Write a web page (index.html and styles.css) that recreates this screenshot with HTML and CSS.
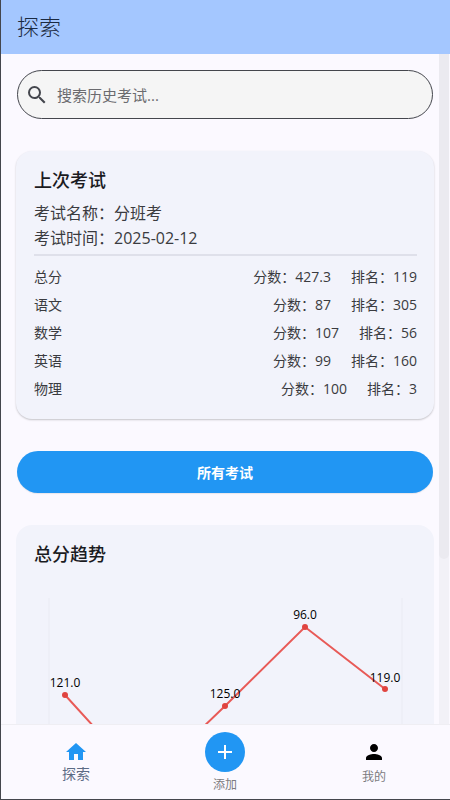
FILE: index.html
```html
<!DOCTYPE html>
<html lang="zh">
<head>
<meta charset="utf-8">
<title>探索</title>
<link rel="stylesheet" href="styles.css">
</head>
<body>
<div class="app">
  <header class="appbar">探索</header>
  <div class="body">
    <main class="content">
      <div class="search">
        <svg class="search-icon" viewBox="0 0 24 24"><path d="M15.5 14h-.79l-.28-.27A6.47 6.47 0 0 0 16 9.5 6.5 6.5 0 1 0 9.5 16c1.61 0 3.09-.59 4.23-1.57l.27.28v.79l5 4.99L20.49 19l-4.99-5zm-6 0C7.01 14 5 11.99 5 9.5S7.01 5 9.5 5 14 7.01 14 9.5 11.99 14 9.5 14z"/></svg>
        <span class="search-text">搜索历史考试...</span>
      </div>
      <section class="card last">
        <h2 class="card-title">上次考试</h2>
        <div class="info first">考试名称<span class="colon">：</span>分班考</div>
        <div class="info">考试时间<span class="colon">：</span>2025-02-12</div>
        <div class="divider"></div>
        <div class="row"><span class="subject">总分</span><span class="score">分数<span class="colon">：</span>427.3</span><span class="rank">排名<span class="colon">：</span>119</span></div>
        <div class="row"><span class="subject">语文</span><span class="score">分数<span class="colon">：</span>87</span><span class="rank">排名<span class="colon">：</span>305</span></div>
        <div class="row"><span class="subject">数学</span><span class="score">分数<span class="colon">：</span>107</span><span class="rank">排名<span class="colon">：</span>56</span></div>
        <div class="row"><span class="subject">英语</span><span class="score">分数<span class="colon">：</span>99</span><span class="rank">排名<span class="colon">：</span>160</span></div>
        <div class="row"><span class="subject">物理</span><span class="score">分数<span class="colon">：</span>100</span><span class="rank">排名<span class="colon">：</span>3</span></div>
      </section>
      <button class="all-btn">所有考试</button>
      <section class="card trend">
        <h2 class="card-title">总分趋势</h2>
        <svg class="chart" viewBox="0 0 418 300" width="418" height="300">
          <g class="grid">
            <line x1="33" y1="24" x2="33" y2="300"/>
            <line x1="386" y1="24" x2="386" y2="300"/>
          </g>
          <polyline class="line" points="49,121 129,209 209,132 289,53 369,115"/>
          <g class="dots">
            <circle cx="49" cy="121" r="3"/>
            <circle cx="209" cy="132" r="3"/>
            <circle cx="289" cy="53" r="3"/>
            <circle cx="369" cy="115" r="3"/>
          </g>
          <g class="labels">
            <text x="49" y="113">121.0</text>
            <text x="209" y="124">125.0</text>
            <text x="289" y="45">96.0</text>
            <text x="369" y="108">119.0</text>
          </g>
        </svg>
      </section>
    </main>
    <div class="scrollbar"><div class="thumb"></div></div>
  </div>
  <nav class="tabbar">
    <div class="tab active">
      <svg class="tab-icon" viewBox="0 0 24 24"><path d="M10 20v-6h4v6h5v-8h3L12 3 2 12h3v8z"/></svg>
      <span class="tab-label">探索</span>
    </div>
    <div class="tab add">
      <div class="fab"><svg viewBox="0 0 24 24"><path d="M19 13h-6v6h-2v-6H5v-2h6V5h2v6h6v2z"/></svg></div>
      <span class="tab-label small">添加</span>
    </div>
    <div class="tab me">
      <svg class="tab-icon" viewBox="0 0 24 24"><path d="M12 12c2.21 0 4-1.79 4-4s-1.79-4-4-4-4 1.79-4 4 1.79 4 4 4zm0 2c-2.67 0-8 1.34-8 4v2h16v-2c0-2.66-5.33-4-8-4z"/></svg>
      <span class="tab-label small">我的</span>
    </div>
  </nav>
</div>
</body>
</html>
```
FILE: styles.css
```css
* { box-sizing: border-box; }
html, body { margin: 0; padding: 0; height: 100%; overflow: hidden; }
body {
  font-family: "Open Sans", "Noto Sans CJK SC", sans-serif;
  background: #fbf9ff;
  color: #1b1b1f;
}
.app {
  width: 450px;
  height: 800px;
  display: flex;
  flex-direction: column;
  border-left: 1px solid #44464d;
  border-bottom: 1px solid #44464d;
  overflow: hidden;
}
.appbar {
  flex: 0 0 54px;
  height: 54px;
  background: #a4c7ff;
  color: #1b2a41;
  font-size: 22px;
  line-height: 52px;
  padding-left: 16px;
  font-weight: 300;
}
.body { flex: 1; display: flex; min-height: 0; position: relative; }
.content {
  flex: 1;
  min-width: 0;
  overflow: hidden;
  padding: 16px 5px 0 15px;
}
.scrollbar { flex: 0 0 10px; width: 10px; margin-right: 1px; background: #f2f1f7; }
.thumb { height: 505px; background: #ebeaf0; border-radius: 0 0 5px 5px; }
.search {
  height: 49px;
  margin: 0 1px;
  border: 1px solid #44464d;
  border-radius: 25px;
  background: #f5f5f5;
  display: flex;
  align-items: center;
  padding-left: 7px;
}
.search-icon { width: 24px; height: 24px; fill: #44464d; }
.search-text { margin-left: 8px; font-size: 15px; color: #6b6b6f; }
.colon { font-family: "Noto Sans CJK TC", sans-serif; }
.card {
  background: #f2f3fb;
  border-radius: 16px;
}
.last {
  margin-top: 32px;
  height: 268px;
  padding: 16px 17px 0 18px;
  box-shadow: 0 1px 2px rgba(0,0,0,.22);
}
.card-title { margin: 0; font-size: 18px; font-weight: 500; line-height: 26px; color: #1b1b1f; }
.info { font-size: 16px; line-height: 24px; color: #3a3b40; }
.info.first { margin-top: 7px; }
.divider { height: 2px; background: #dfe0ea; margin: 4px 0 6px; }
.row { display: flex; height: 28px; align-items: center; font-size: 14px; color: #3a3b40; }
.subject { margin-right: auto; }
.rank { margin-left: 20px; }
.all-btn {
  display: block;
  width: calc(100% - 2px);
  height: 42px;
  margin: 32px 1px 0;
  border: 0;
  border-radius: 21px;
  background: #2196f3;
  color: #fff;
  font: 700 14px "Noto Sans CJK SC", sans-serif;
  box-shadow: 0 1px 1px rgba(0,0,0,.08);
}
.trend {
  margin-top: 32px;
  height: 320px;
  padding: 16px 0 0;
}
.trend .card-title { padding-left: 18px; }
.chart { display: block; margin-top: 7px; overflow: hidden; }
.grid line { stroke: #eaebf3; stroke-width: 1; }
.line { fill: none; stroke: #e85a57; stroke-width: 2; }
.dots circle { fill: #e04440; }
.labels text { font-family: "Open Sans", "Noto Sans", sans-serif; font-size: 12px; text-anchor: middle; fill: #000; }
.tabbar {
  flex: 0 0 75px;
  height: 75px;
  background: #fbf9ff;
  border-top: 1px solid #efeef3;
  display: grid;
  grid-template-columns: 150px 148px 150px;
  position: relative;
}
.tab { display: flex; flex-direction: column; align-items: center; }
.tab.active { padding-top: 15px; }
.tab.add { padding-top: 7px; }
.tab.me { padding-top: 15px; }
.tab-icon { width: 24px; height: 24px; fill: #000; display: block; }
.active .tab-icon { fill: #2196f3; }
.tab-label { font-size: 14px; line-height: 20px; color: #5b6b85; margin-top: 0; }
.tab-label.small { font-size: 12px; color: #7b7b80; }
.me .tab-label { margin-top: 3px; }
.add .tab-label { margin-top: 3px; }
.fab { width: 40px; height: 40px; border-radius: 50%; background: #2196f3; display: flex; align-items: center; justify-content: center; }
.fab svg { width: 24px; height: 24px; fill: #fff; }
```
